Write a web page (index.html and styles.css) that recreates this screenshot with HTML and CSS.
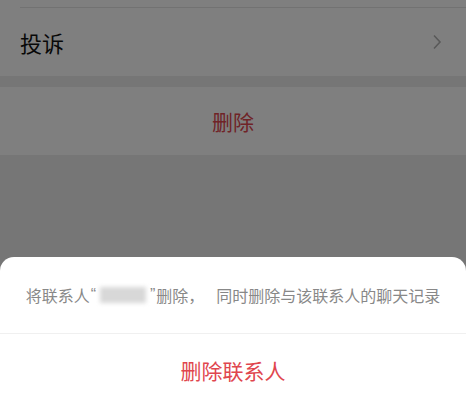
FILE: index.html
```
<!DOCTYPE html>
<html lang="zh-CN">
<head>
    <meta charset="UTF-8">
    <meta name="viewport" content="width=device-width, initial-scale=1.0">
    <title>删除联系人</title>
    <link rel="stylesheet" href="styles.css">
</head>
<body>
    <div class="page">
        <div class="cell cell-top"></div>
        <div class="cell cell-link">
            <span class="cell-title">投诉</span>
            <svg class="arrow" width="10" height="16" viewBox="0 0 10 16">
                <path d="M2 1.5 L8 8 L2 14.5" fill="none" stroke="#b2b2b2" stroke-width="1.6"/>
            </svg>
        </div>
        <div class="cell cell-danger">删除</div>
    </div>

    <div class="mask"></div>

    <div class="sheet">
        <div class="sheet-tip">将联系人<span class="quote">“</span><span class="blur"></span><span class="quote">”</span>删除，<span class="gap"></span>同时删除与该联系人的聊天记录</div>
        <div class="sheet-btn">删除联系人</div>
    </div>
</body>
</html>
```

FILE: styles.css
```
*, *:before, *:after{
    margin: 0;
    padding: 0;
    box-sizing: border-box;
}
body{
    width: 466px;
    height: 400px;
    overflow: hidden;
    position: relative;
    background: #ededed;
    font-family: "Noto Sans CJK SC", "Noto Sans", sans-serif;
}
.page{
    display: flex;
    flex-direction: column;
}
.cell{
    background: #fff;
}
.cell-top{
    height: 8px;
    position: relative;
}
.cell-top:after{
    content: "";
    position: absolute;
    left: 20px;
    right: 0;
    bottom: 0;
    height: 1px;
    background: #e5e5e5;
}
.cell-link{
    height: 68px;
    display: flex;
    align-items: center;
    justify-content: space-between;
    padding: 0 24px 0 20px;
}
.cell-title{
    font-size: 22px;
    color: #111;
}
.arrow{
    display: block;
}
.cell-danger{
    margin-top: 11px;
    height: 68px;
    display: flex;
    align-items: center;
    justify-content: center;
    font-size: 21px;
    color: #e0464e;
}
.mask{
    position: absolute;
    inset: 0;
    background: rgba(0, 0, 0, 0.5);
}
.sheet{
    position: absolute;
    left: 0;
    right: 0;
    top: 257px;
    bottom: 0;
    background: #fff;
    border-radius: 14px 14px 0 0;
    display: flex;
    flex-direction: column;
}
.sheet-tip{
    height: 81px;
    display: flex;
    align-items: center;
    justify-content: center;
    font-size: 16px;
    color: #888;
    border-bottom: 1px solid #f0f0f0;
    white-space: nowrap;
}
.quote{
    font-family: "Liberation Sans", sans-serif;
    margin: 0 1px;
}
.blur{
    display: inline-block;
    width: 46px;
    height: 16px;
    margin: 0 3px;
    background: #d8d8d8;
    filter: blur(2px);
    vertical-align: middle;
}
.gap{
    display: inline-block;
    width: 12px;
}
.sheet-btn{
    height: 70px;
    padding-top: 6px;
    display: flex;
    align-items: center;
    justify-content: center;
    font-size: 21px;
    color: #e0464e;
}
```
